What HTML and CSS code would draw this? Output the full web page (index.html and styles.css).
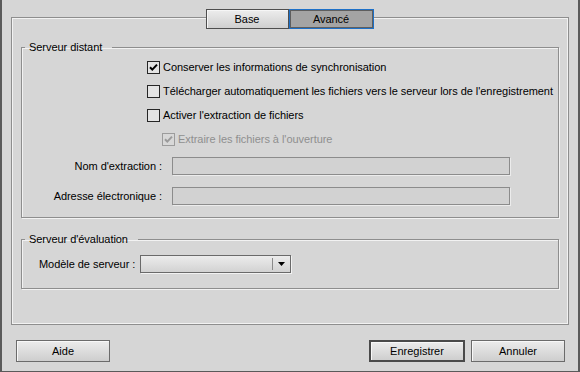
FILE: index.html
```html
<!DOCTYPE html>
<html lang="fr">
<head>
  <meta charset="UTF-8">
  <title>Définition du site</title>
  <link rel="stylesheet" href="styles.css">
</head>
<body>
  <div class="window">
    <div class="tabs">
      <div class="tab">Base</div>
      <div class="tab active">Avancé</div>
    </div>

    <div class="panel">
      <fieldset class="group remote">
        <legend>Serveur distant</legend>
        <div class="check-row">
          <span class="box"><svg viewBox="0 0 11 11" width="11" height="11"><path d="M2 5.2 L4.3 7.6 L9 2.6" fill="none" stroke="#000" stroke-width="2"/></svg></span>
          Conserver les informations de synchronisation
        </div>
        <div class="check-row">
          <span class="box"></span>
          Télécharger automatiquement les fichiers vers le serveur lors de l'enregistrement
        </div>
        <div class="check-row">
          <span class="box"></span>
          Activer l'extraction de fichiers
        </div>
        <div class="check-row sub disabled">
          <span class="box"><svg viewBox="0 0 11 11" width="11" height="11"><path d="M2 5.2 L4.3 7.6 L9 2.6" fill="none" stroke="#9a9a9a" stroke-width="2"/></svg></span>
          Extraire les fichiers à l'ouverture
        </div>
        <div class="field-row first">
          <span class="field-label">Nom d'extraction :</span>
          <span class="text-input"></span>
        </div>
        <div class="field-row">
          <span class="field-label">Adresse électronique :</span>
          <span class="text-input"></span>
        </div>
      </fieldset>

      <fieldset class="group testing">
        <legend>Serveur d'évaluation</legend>
        <div class="select-row">
          <span class="select-label">Modèle de serveur :</span>
          <span class="select">
            <span class="select-value"></span>
            <span class="select-arrow"><svg viewBox="0 0 7 4" width="7" height="4"><path d="M0 0 H7 L3.5 4 Z" fill="#000"/></svg></span>
          </span>
        </div>
      </fieldset>
    </div>

    <div class="buttons">
      <button class="btn">Aide</button>
      <span class="spacer"></span>
      <button class="btn default">Enregistrer</button>
      <button class="btn">Annuler</button>
    </div>
  </div>
</body>
</html>
```

FILE: styles.css
```css
body { margin: 0; background: #d6d6d6; font-family: "Liberation Sans", Arial, sans-serif; font-size: 11px; letter-spacing: -0.05px; color: #000; }
.window { width: 580px; height: 372px; box-sizing: border-box; background: #d6d6d6; border-left: 2px solid #5a5a5a; border-right: 2px solid #5a5a5a; border-bottom: 1px solid #5a5a5a; overflow: hidden; }

.tabs { position: relative; z-index: 1; display: flex; justify-content: center; margin-top: 9px; height: 20px; padding-right: 1px; }
.tab { box-sizing: border-box; height: 20px; line-height: 18px; text-align: center; border: 1px solid #4e4e4e; background: linear-gradient(#ededed, #cfcfcf); box-shadow: inset 1px 1px 0 #f6f6f6; }
.tab:first-child { width: 83px; }
.tab.active { width: 85px; background: #a4a4a4; border-color: #1d70c8; box-shadow: inset 0 0 0 1px #5e5e5e; }

.panel { box-sizing: border-box; height: 308px; margin: -12px 9px 0 9px; border: 1px solid #8e8e8e; box-shadow: inset 0 0 0 1px #f2f2f2; padding-top: 1px; }

.group { margin: 0 9px; padding: 0; border: 1px solid #8e8e8e; box-shadow: inset 1px 1px 0 #f2f2f2, 1px 1px 0 #f2f2f2; min-width: 0; }
.group legend { margin-left: 3px; padding: 0 10px 0 4px; line-height: 13px; height: 13px; }
.remote { margin-top: 22px; padding: 1px 0 12px 0; }
.testing { margin-top: 15px; padding: 9px 0 15px 0; }

.check-row { display: flex; align-items: center; height: 24px; padding-left: 125px; }
.check-row.sub { padding-left: 140px; }
.box { box-sizing: border-box; width: 13px; height: 13px; margin-right: 3px; border: 1px solid #262626; background: #e4e4e4; display: flex; align-items: center; justify-content: center; }
.disabled { color: #8f8f8f; }
.disabled .box { border-color: #9c9c9c; background: #d8d8d8; }

.field-row { display: flex; align-items: center; height: 18px; margin-top: 12px; }
.field-row.first { margin-top: 6px; }
.field-label { width: 140px; text-align: right; margin-right: 10px; }
.text-input { box-sizing: border-box; width: 338px; height: 18px; border: 1px solid #8c8c8c; background: #d2d2d2; box-shadow: 1px 1px 0 #ececec; }

.select-row { display: flex; align-items: center; height: 18px; padding-left: 17px; }
.select-label { margin-right: 5px; }
.select { box-sizing: border-box; display: flex; width: 151px; height: 18px; border: 1px solid #6a6a6a; background: linear-gradient(#ececec, #d2d2d2); box-shadow: 1px 1px 0 #f2f2f2; }
.select-value { flex: 1; border-right: 1px solid #8a8a8a; margin: 2px 0; }
.select-arrow { width: 17px; display: flex; align-items: center; justify-content: center; }

.buttons { display: flex; margin: 15px 13px 0 14px; gap: 6px; }
.spacer { flex: 1; }
.btn { box-sizing: border-box; width: 94px; height: 22px; padding: 0; font: inherit; color: #000; border: 1px solid #6b6b6b; background: linear-gradient(#ececec, #cecece); box-shadow: inset 1px 1px 0 #f8f8f8; }
.btn.default { width: 96px; border: 2px solid #4a4a4a; }
```
